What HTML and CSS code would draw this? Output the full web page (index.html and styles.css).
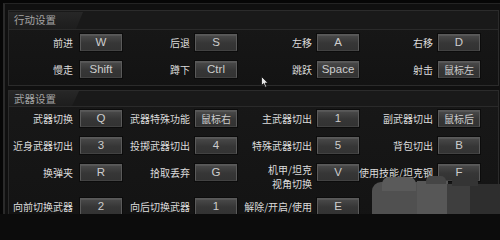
FILE: index.html
```html
<!DOCTYPE html>
<html>
<head>
<meta charset="utf-8">
<link rel="stylesheet" href="styles.css">
</head>
<body>
<div class="frame">
  <section class="panel panel-move">
    <header class="head head-tall"><span class="tab">行动设置</span></header>
    <div class="grid">
      <span class="label c1">前进</span><span class="key">W</span>
      <span class="label">后退</span><span class="key">S</span>
      <span class="label">左移</span><span class="key">A</span>
      <span class="label">右移</span><span class="key">D</span>

      <span class="label c1">慢走</span><span class="key">Shift</span>
      <span class="label">蹲下</span><span class="key">Ctrl</span>
      <span class="label">跳跃</span><span class="key">Space</span>
      <span class="label">射击</span><span class="key cjk">鼠标左</span>
    </div>
  </section>

  <section class="panel panel-weapon">
    <header class="head head-short"><span class="tab">武器设置</span></header>
    <div class="grid">
      <span class="label c1">武器切换</span><span class="key">Q</span>
      <span class="label">武器特殊功能</span><span class="key cjk">鼠标右</span>
      <span class="label">主武器切出</span><span class="key">1</span>
      <span class="label">副武器切出</span><span class="key cjk">鼠标后</span>

      <span class="label c1">近身武器切出</span><span class="key">3</span>
      <span class="label">投掷武器切出</span><span class="key">4</span>
      <span class="label">特殊武器切出</span><span class="key">5</span>
      <span class="label">背包切出</span><span class="key">B</span>

      <span class="label c1">换弹夹</span><span class="key">R</span>
      <span class="label">拾取丢弃</span><span class="key">G</span>
      <span class="label two">机甲/坦克<br>视角切换</span><span class="key">V</span>
      <span class="label">使用技能/坦克钢</span><span class="key">F</span>

      <span class="label c1">向前切换武器</span><span class="key">2</span>
      <span class="label">向后切换武器</span><span class="key">1</span>
      <span class="label">解除/开启/使用</span><span class="key">E</span>
      <span class="label"></span><span class="key"></span>
    </div>
  </section>
</div>

<div class="mosaic">
  <span class="m m1"></span>
  <span class="m m2"></span>
  <span class="m m3"></span>
  <span class="m m4"></span>
  <span class="m m5"></span>
  <span class="m m6"></span>
  <span class="m m7"></span>
</div>

<svg class="cursor" width="8" height="12" viewBox="0 0 8 12">
  <path d="M0.5 0.5 L0.5 9.5 L2.6 7.6 L4.2 11.2 L5.6 10.6 L4.1 7.1 L7 7.1 Z" fill="#e6e6e6" stroke="#111" stroke-width="0.8"/>
</svg>
</body>
</html>
```

FILE: styles.css
```css
html {
  margin: 0;
  padding: 0;
  background: #0c0c0c;
}

body {
  margin: 0;
  padding: 3px 0 0 3px;
  width: 500px;
  height: 214px;
  box-sizing: border-box;
  overflow: hidden;
  background: #060606;
  position: relative;
  font-family: "Noto Sans CJK SC", "Noto Sans", sans-serif;
}

.frame {
  height: 211px;
  box-sizing: border-box;
  overflow: hidden;
  border-top: 1px solid #242424;
  border-left: 2px solid #2a2a2a;
  background: #101010;
  padding: 6px 1px 0 3px;
}

.panel {
  border: 1px solid #2b2b2b;
  background: linear-gradient(#181818, #131313);
}

.panel-weapon {
  margin-top: 4px;
  border-bottom: none;
  height: 140px;
}

.head {
  display: flex;
  background: #191919;
  border-bottom: 1px solid #2a2a2a;
}

.head-tall {
  padding-top: 1px;
  height: 17px;
}

.head-short {
  height: 15px;
}

.tab {
  width: 74px;
  padding-left: 5px;
  box-sizing: border-box;
  background: linear-gradient(#272727, #1d1d1d);
  clip-path: polygon(0 0, 100% 0, calc(100% - 7px) 100%, 0 100%);
  color: #a4a4a4;
  font-size: 10.5px;
  line-height: 16px;
  white-space: nowrap;
}

.head-short .tab {
  line-height: 15px;
  width: 70px;
}

.grid {
  display: grid;
  grid-template-columns: 71px 42px 73px 42px 80px 42px 79px 42px;
  row-gap: 10px;
  align-items: start;
  padding: 4px 0 7px 0;
}

.panel-weapon .grid {
  padding-top: 3px;
}

.label {
  color: #dcdcdc;
  font-size: 10px;
  line-height: 17px;
  height: 17px;
  text-align: right;
  padding-right: 5px;
  white-space: nowrap;
}

.label.c1 {
  padding-right: 7px;
}

.label.two {
  line-height: 14px;
  height: 28px;
  margin-top: -1px;
  margin-bottom: -3px;
}

.key {
  height: 17px;
  box-sizing: border-box;
  border: 1px solid #5a5a5a;
  border-bottom-color: #424242;
  background: linear-gradient(#4a4a4a, #363636 55%, #333333);
  box-shadow: inset 0 1px 0 rgba(255, 255, 255, 0.07), 0 0 0 1px #0c0c0c;
  color: #cdcdcd;
  font-family: "Liberation Sans", Arial, sans-serif;
  font-size: 11.5px;
  line-height: 15px;
  text-align: center;
  white-space: nowrap;
  overflow: hidden;
}

.key.cjk {
  font-family: "Noto Sans CJK SC", sans-serif;
  font-size: 10px;
}

.mosaic {
  position: absolute;
  left: 368px;
  top: 175px;
  width: 132px;
  height: 39px;
}

.m {
  position: absolute;
  display: block;
}

.m1 { left: 4px; top: 7px; width: 46px; height: 32px; background: #505050; border-radius: 9px 0 0 0; }
.m2 { left: 14px; top: 2px; width: 34px; height: 14px; background: #5a5a5a; border-radius: 7px 7px 0 0; }
.m3 { left: 49px; top: 6px; width: 31px; height: 33px; background: #575757; }
.m4 { left: 58px; top: 1px; width: 20px; height: 8px; background: #454545; border-radius: 5px 5px 0 0; }
.m5 { left: 79px; top: 9px; width: 24px; height: 30px; background: #3e3e3e; }
.m6 { left: 102px; top: 9px; width: 30px; height: 30px; background: #2e2e2e; }
.m7 { left: 84px; top: 3px; width: 26px; height: 8px; background: #343434; border-radius: 4px 4px 0 0; }

.cursor {
  position: absolute;
  left: 261px;
  top: 76px;
}
```
